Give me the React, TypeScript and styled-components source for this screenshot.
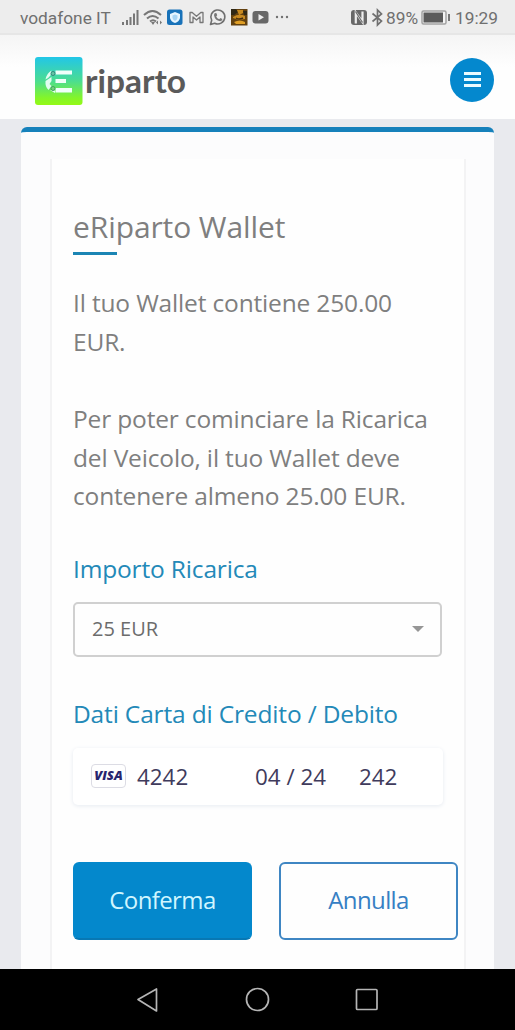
import React from 'react';
import styled, { createGlobalStyle } from 'styled-components';

const Global = createGlobalStyle`
  * { box-sizing: border-box; }
  body { margin: 0; background: #e9ebef; font-family: 'Open Sans', 'Noto Sans', sans-serif; }
`;

const Screen = styled.div`
  width: 515px;
  height: 1030px;
  display: flex;
  flex-direction: column;
  overflow: hidden;
  background: #e9eaee;
`;

const StatusBar = styled.div`
  height: 35px;
  flex: none;
  display: flex;
  align-items: center;
  justify-content: space-between;
  padding: 0 17px 0 20px;
  background: #ededed;
  border-bottom: 2px solid #e6e6e6;
  font: 400 17.3px/33px Roboto, sans-serif;
  color: #707070;
`;

const StatusGroup = styled.div`
  display: flex;
  align-items: center;
  height: 33px;
`;

const StatusText = styled.span<{ $w: number }>`
  width: ${(p) => p.$w}px;
  white-space: nowrap;
  padding-top: 3px;
`;

const Header = styled.header`
  height: 84px;
  flex: none;
  display: flex;
  align-items: center;
  justify-content: space-between;
  padding: 8px 21px 0 35px;
  background: linear-gradient(#f5f5f5, #fefefe 32px);
`;

const MenuButton = styled.button`
  width: 44px;
  height: 44px;
  margin-top: -3px;
  border: 0;
  border-radius: 50%;
  background: #0488ce;
  display: flex;
  flex-direction: column;
  align-items: center;
  justify-content: center;
  gap: 3px;
  padding: 0;
`;

const MenuLine = styled.span`
  width: 17px;
  height: 3px;
  background: #e9fbff;
`;

const Main = styled.main`
  flex: 1;
  min-height: 0;
  display: flex;
  padding: 8px 21px 0;
`;

const Panel = styled.section`
  flex: 1;
  min-width: 0;
  display: flex;
  padding: 27px 28px 0 29px;
  background: #fcfcfd;
  border-top: 5px solid #1681bb;
  border-radius: 6px 6px 0 0;
`;

const Card = styled.div`
  flex: 1;
  min-width: 0;
  background: #fefefe;
  border: solid #f3f3f4;
  border-width: 0 2px;
  padding: 47px 0 0 21px;
`;

const Title = styled.h1`
  margin: 0;
  font-size: 30px;
  line-height: 42px;
  font-weight: 400;
  letter-spacing: -0.1px;
  color: #7f7f7f;
  white-space: nowrap;
`;

const TitleRule = styled.div`
  width: 44px;
  height: 3px;
  margin-top: 4px;
  background: #1b85b4;
`;

const Message = styled.p<{ $top: number }>`
  margin: ${(p) => p.$top}px 0 0;
  font-size: 24.5px;
  line-height: 38.5px;
  letter-spacing: -0.16px;
  color: #7f7f7f;
  white-space: nowrap;
`;

const Label = styled.h2<{ $top: number }>`
  margin: ${(p) => p.$top}px 0 0;
  font-size: 24.5px;
  line-height: 34px;
  letter-spacing: -0.16px;
  font-weight: 400;
  color: #2389b8;
  white-space: nowrap;
`;

const Select = styled.div`
  width: 369px;
  height: 55px;
  margin-top: 16px;
  padding: 0 16px 2px 17px;
  border: 2px solid #d0d0d0;
  border-radius: 5px;
  display: flex;
  align-items: center;
  justify-content: space-between;
  font-size: 20px;
  color: #6c6c6c;
`;

const Caret = styled.span`
  margin-top: 2px;
  border: solid transparent;
  border-width: 6px 6px 0;
  border-top-color: #969696;
`;

const CardField = styled.div`
  width: 370px;
  height: 57px;
  margin-top: 17px;
  padding-left: 18px;
  border-radius: 5px;
  background: #fff;
  box-shadow: 0 1px 4px #e6ebf1;
  display: flex;
  align-items: center;
  font-size: 22.4px;
  color: #3f3b5c;
`;

const VisaBadge = styled.span`
  width: 35px;
  height: 24px;
  margin-right: 11px;
  border: 1px solid #dcdce4;
  border-radius: 4px;
  font: italic 800 13px/21px 'Open Sans', sans-serif;
  text-align: center;
  color: #28256f;
`;

const CardPart = styled.span<{ $w: number }>`
  width: ${(p) => p.$w}px;
  white-space: nowrap;
`;

const Actions = styled.div`
  display: flex;
  gap: 27px;
  width: 385px;
  margin-top: 57px;
`;

const Button = styled.button<{ $primary?: boolean }>`
  flex: 1;
  height: 78px;
  padding: 0 0 2px;
  border: 2px solid ${(p) => (p.$primary ? '#0488cc' : '#3f86c3')};
  border-bottom-color: ${(p) => (p.$primary ? '#0878b4' : '#3f86c3')};
  border-radius: 6px;
  background: ${(p) => (p.$primary ? '#0488cc' : '#fefefe')};
  color: ${(p) => (p.$primary ? '#d0f6ff' : '#3680c4')};
  font: 400 24px 'Open Sans', sans-serif;
  letter-spacing: -0.6px;
`;

const NavBar = styled.nav`
  height: 61px;
  flex: none;
  background: #000;
  display: flex;
  justify-content: center;
`;

const Logo = () => (
  <svg width="154" height="50" viewBox="0 0 154 50">
    <defs>
      <linearGradient id="tile" x1="0" y1="0" x2="0" y2="1">
        <stop offset="0" stopColor="#22c6e8" />
        <stop offset=".5" stopColor="#4bdd91" />
        <stop offset=".85" stopColor="#83f52a" />
        <stop offset="1" stopColor="#94f916" />
      </linearGradient>
    </defs>
    <rect x="0" y="1" width="47.5" height="48" rx="3" fill="url(#tile)" />
    <path d="M20.500 14.500h16.500v4H20.500zM20.500 23h10.500v4H20.500zM20.500 32h16.500v4.500H20.500z" fill="#effffa" />
    <path d="M16.500 14.500q-5 3-6 9 2.500-1 5-4zM10.500 25q-.5 6 3 9l3-4-2-2 2-3v-4zM15 34l5 3v-2.500z" fill="#e2fdf1" />
    <circle cx="18" cy="17.500" r="2" fill="#65c7a8" stroke="#35877c" />
    <circle cx="18" cy="32.500" r="2" fill="#72d579" stroke="#42a067" />
    <text x="50" y="36.500" textLength="101" lengthAdjust="spacingAndGlyphs" fontFamily="Lato, sans-serif" fontWeight="700" fontSize="33" fill="#5a5a5a">riparto</text>
  </svg>
);

const StatusIcons = () => (
  <svg width="170" height="33" viewBox="120 0 170 33" fill="none">
    <path d="M123 25v-3M127 25v-5M130.500 25v-8M134 25V13.500M137.500 25V10" stroke="#777" strokeWidth="2" />
    <path d="M144 15q8.500-8 17 0M147 18.500q5.500-5 11.500 0M150 21.500q3-2.500 6 0" stroke="#777" strokeWidth="2" />
    <path d="M151 22h4l-2 3zM156 22.500l2-2v4zM162 22.500l-2-2v4z" fill="#777" />
    <rect x="167" y="9.500" width="15.500" height="15.500" rx="2.500" fill="#1872b9" />
    <path d="M175 12l5 2v4q-1 4-5 5-4-1-5-5v-4z" fill="#e6f5ff" />
    <path d="M175 14.500l2.500 1v2.500q-.5 2-2.500 3-2-1-2.500-3v-2.500z" fill="#a9d5f4" />
    <path d="M190 22.500V12.500h2.200l4.300 3.700 4.300-3.700h2.200v10h-3v-5.500l-3.500 3-3.500-3v5.500z" stroke="#777" strokeWidth="1.300" strokeLinejoin="round" />
    <path d="M210.500 24.500l1.200-4.200a7 7 0 1 1 3 2.900z" stroke="#707070" strokeWidth="1.600" strokeLinejoin="round" />
    <path d="M215 13l1.500.2.700 2-1 1.200q1 2 3 2.800l1.200-1.200 2 1q0 2-2.200 2.200-5.200-.7-6.200-6 .2-1.700 1-2.200z" fill="#777" />
    <rect x="231" y="9" width="16.500" height="16.500" fill="#63410f" />
    <path d="M231 9h5l2 3-4 3h-3zM243 11h4v4h-3z" fill="#302815" />
    <path d="M237 10h6v3l-4 2zM233 17q6-4 12-1v3q-6 2-12-1z" fill="#c88a20" />
    <path d="M234 22q6-3 11 0v2h-9z" fill="#df9e25" />
    <path d="M236 18q3 2 7 0" stroke="#432b0d" strokeWidth="1.500" />
    <rect x="252.500" y="11" width="16" height="12.500" rx="3" fill="#686868" />
    <path d="M258.500 14v6.500l5.500-3.300z" fill="#ededed" />
    <g fill="#707070"><circle cx="277" cy="17" r="1.200" /><circle cx="282" cy="17" r="1.200" /><circle cx="287" cy="17" r="1.200" /></g>
  </svg>
);

const NfcBluetooth = () => (
  <svg width="35" height="33" viewBox="351 0 35 33" fill="none">
    <rect x="351" y="10" width="16" height="15" rx="3" fill="#686868" />
    <path d="M355.800 23.500V12.500l6.700 9.500V11.500" stroke="#ededed" strokeWidth="2.200" />
    <path d="M355.500 11.500l7 11" stroke="#686868" strokeWidth="1.200" />
    <path d="M372.500 13.500l9 7.500-4 4V10l4 4-9 7.500" stroke="#707070" strokeWidth="1.700" />
  </svg>
);

const Battery = () => (
  <svg width="34" height="33" viewBox="421 0 34 33">
    <rect x="422" y="11" width="24" height="13" rx="1.500" fill="#f4f4f4" stroke="#a2a2a2" strokeWidth="1.500" />
    <rect x="423.500" y="12.500" width="19.500" height="10" fill="#5b5b5b" />
    <rect x="448" y="14" width="2" height="7" fill="#777" />
  </svg>
);

const NavIcons = () => (
  <svg width="515" height="61" viewBox="0 0 515 61" fill="none" stroke="#b5b5b5" strokeWidth="1.700" strokeLinejoin="round">
    <path d="M156.500 20v22l-18.500-11.500z" />
    <circle cx="257.500" cy="30.500" r="11" />
    <rect x="356.500" y="20.500" width="20.500" height="20" rx="1" />
  </svg>
);

export default function App() {
  return (
    <Screen>
      <Global />
      <StatusBar>
        <StatusGroup>
          <StatusText $w={100}>vodafone IT</StatusText>
          <StatusIcons />
        </StatusGroup>
        <StatusGroup>
          <NfcBluetooth />
          <StatusText $w={35}>89%</StatusText>
          <Battery />
          <StatusText $w={43}>19:29</StatusText>
        </StatusGroup>
      </StatusBar>
      <Header>
        <Logo />
        <MenuButton aria-label="Menu">
          <MenuLine />
          <MenuLine />
          <MenuLine />
        </MenuButton>
      </Header>
      <Main>
        <Panel>
          <Card>
            <Title>eRiparto Wallet</Title>
            <TitleRule />
            <Message $top={29}>
              Il tuo Wallet contiene 250.00<br />EUR.
            </Message>
            <Message $top={39}>
              Per poter cominciare la Ricarica<br />
              del Veicolo, il tuo Wallet deve<br />
              contenere almeno 25.00 EUR.
            </Message>
            <Label $top={36}>Importo Ricarica</Label>
            <Select>
              25 EUR
              <Caret />
            </Select>
            <Label $top={40}>Dati Carta di Credito / Debito</Label>
            <CardField>
              <VisaBadge>VISA</VisaBadge>
              <CardPart $w={118}>4242</CardPart>
              <CardPart $w={104}>04 / 24</CardPart>
              <CardPart $w={50}>242</CardPart>
            </CardField>
            <Actions>
              <Button $primary>Conferma</Button>
              <Button>Annulla</Button>
            </Actions>
          </Card>
        </Panel>
      </Main>
      <NavBar>
        <NavIcons />
      </NavBar>
    </Screen>
  );
}
